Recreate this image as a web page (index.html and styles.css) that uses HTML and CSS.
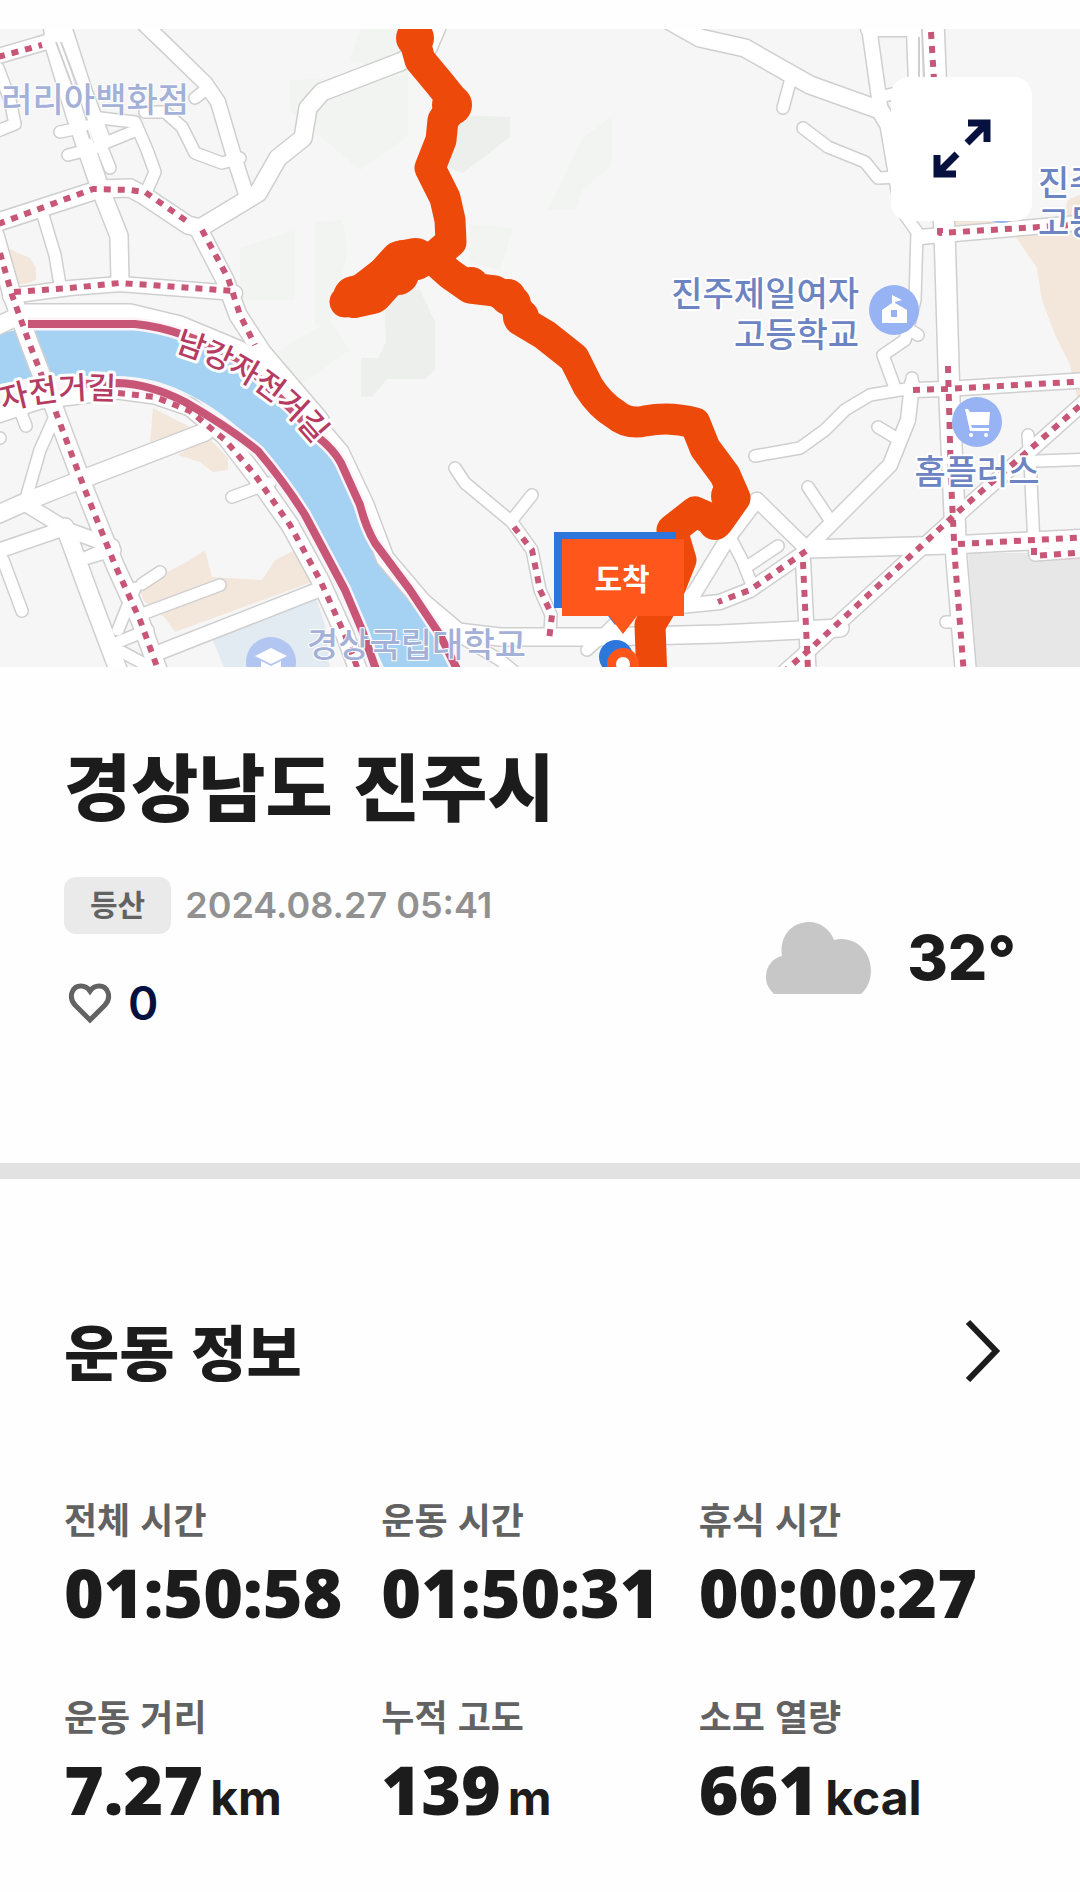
FILE: index.html
```html
<!DOCTYPE html>
<html lang="ko">
<head>
    <meta charset="UTF-8">
    <meta name="viewport" content="width=device-width, initial-scale=1.0">
    <title>경상남도 진주시</title>
    <link rel="stylesheet" href="styles.css">
</head>
<body>
    <div class="map">
        <svg class="map-canvas" viewBox="0 29 1080 638" role="img" aria-label="운동 경로 지도">
            <defs>
                <g id="roads-wide">
                    <path d="M52 20L54 45L75 115L100 188L119 236L120 282"/>
                    <path d="M440 20L428 48L400 62L322 92L308 108L303 138L278 158L258 193L200 228L188 225L143 195L130 188L100 189L-5 223"/>
                    <path d="M198 228L225 280L238 315L262 352L320 420"/>
                    <path d="M-5 235L12 295L30 345L55 410L85 490L115 565L140 620L160 675"/>
                    <path d="M-5 327L25 313L130 313L180 325L240 350L300 405L340 452L365 505L385 558L425 605L450 630"/>
                    <path d="M-8 517L30 500L75 482L205 432"/>
                    <path d="M65 527L88 590L122 680"/>
                    <path d="M668 20L700 38L745 48L810 85L880 110L889 125L900 190"/>
                    <path d="M931 20L937 150L943 230L948 400L955 560L965 680"/>
                    <path d="M935 20L940 150L946 230L951 400L958 560L968 680"/>
                    <path d="M808 549L950 545L1090 538"/>
                    <path d="M420 600L458 632L500 637L600 637L720 634L840 628"/>
                    <path d="M-5 415L40 400L118 390L155 395L190 407L225 436L255 475L290 525L320 580L345 635L360 675"/>
                </g>
                <g id="roads-mid">
                    <path d="M-5 57L50 41"/>
                    <path d="M140 20L165 44L205 83L218 102L235 160L248 200"/>
                    <path d="M10 296L70 288L120 284L235 293"/>
                    <path d="M62 20L85 92L103 140"/>
                    <path d="M920 237L1090 222"/>
                    <path d="M915 390L945 389L1090 380"/>
                    <path d="M912 384L908 420L890 465L845 510L805 550"/>
                    <path d="M1090 397L960 513L808 651L770 685"/>
                    <path d="M808 550L750 590L720 602L680 606"/>
                    <path d="M803 560L809 680"/>
                    <path d="M757 500L808 550"/>
                    <path d="M757 500L728 538L695 592L680 606"/>
                    <path d="M868 20L880 105M868 29L914 29L916 85"/>
                    <path d="M27 505L68 530L112 546"/>
                    <path d="M160 652L318 590"/>
                    <path d="M-5 552L65 528"/>
                </g>
                <g id="roads-thin">
                    <path d="M42 212L55 255L60 285"/>
                    <path d="M60 132L98 124M68 155L95 148M95 130L110 168M100 145L137 130M100 118L135 122L147 150L155 172L148 188"/>
                    <path d="M145 112L165 112L182 127L195 153L222 163L240 158"/>
                    <path d="M195 98L208 88"/>
                    <path d="M-5 132L15 124L10 100L-2 68"/>
                    <path d="M27 495L40 450L57 412"/>
                    <path d="M3 560L22 611"/>
                    <path d="M80 560L112 546M142 584L160 572M145 613L220 585M118 630L135 588M118 642L148 630M122 652L152 668M88 558L115 550"/>
                    <path d="M232 497L270 483M20 410L26 426M-5 438L0 438"/>
                    <path d="M790 82L783 108"/>
                    <path d="M803 128L828 147L865 162L878 178L900 177"/>
                    <path d="M905 215L917 232L915 300L905 340L883 355L895 388M905 327L918 335"/>
                    <path d="M755 456L800 448L825 430L845 410L870 395L912 388"/>
                    <path d="M878 427L896 438M808 487L832 523M912 378L912 390M880 97L900 92"/>
                    <path d="M730 537L742 560L752 585M748 566L778 546"/>
                    <path d="M1028 435L1030 460L1034 545L1035 555L1090 551M1038 461L1090 459M946 622L962 622"/>
                    <path d="M455 468L465 483L512 522L532 550L540 590L551 615L550 632M532 495L512 520"/>
                    <path d="M587 650L600 638L620 618M435 622L500 660L530 685"/>
                </g>
            </defs>

            <rect class="land" y="29" width="1080" height="638"/>

            <!-- parks and blocks -->
            <g class="park">
                <path d="M612 117V165L582 190L576 210H548L570 165L582 138Z"/>
                <path d="M290 80L408 75V136L360 170L290 110Z"/>
                <path d="M240 248L295 230V300H240ZM315 222L342 220L348 250L330 325H315Z"/>
                <path d="M255 365L330 320L350 350L300 385ZM470 224L513 228L500 270L470 262ZM360 29L408 29V75L350 60Z"/>
            </g>
            <g class="park-dark">
                <path d="M460 115L510 117V137L463 173L440 165Z"/>
                <path d="M384 290H420L435 322V370L425 379H387L372 397H361V358H378L386 342Z"/>
            </g>
            <g class="block">
                <path d="M0 245L30 258L36 268V280L28 283L12 285Z"/>
                <path d="M153 408L192 428L150 442Z"/>
                <path d="M178 455L208 437L228 458V470L213 472L200 462Z"/>
                <path d="M138 588L190 560L205 550L212 577L262 580L275 560L295 550L312 582L175 632L165 618L145 602Z"/>
                <path d="M1090 190L1068 200L1060 225L1015 236L1037 268L1042 300L1055 335L1070 365L1080 410Z"/>
                <path d="M952 215H1000V228H952Z"/>
            </g>
            <path class="campus" d="M212 638L315 595L325 625L330 670H225Z"/>
            <path class="mall" d="M968 553L1035 553L1090 558V670H975Z"/>

            <path class="river" d="M-5 335L20 329H135Q180 332 240 361L290 410L318 440L340 465L357 505L372 545L410 595L440 640L455 670H385L350 590L312 515Q285 475 262 450Q225 412 190 395Q155 376 115 376H40L-5 385Z"/>

            <!-- road outlines first, then fills -->
            <g class="casing">
                <use href="#roads-wide" stroke-width="20"/>
                <use href="#roads-mid" stroke-width="17"/>
                <use href="#roads-thin" stroke-width="14"/>
            </g>
            <g class="road">
                <use href="#roads-wide" stroke-width="17"/>
                <use href="#roads-mid" stroke-width="14"/>
                <use href="#roads-thin" stroke-width="11"/>
            </g>
            <path class="median" d="M56 42L72 85M61 42L77 85M87 130L90 139M919 37V78"/>

            <!-- riverside cycle path -->
            <g class="cycle-edge">
                <path d="M28 324H135Q180 328 240 360L290 408L318 437Q334 450 341 463L360 505Q366 528 375 543L410 590L440 635L460 675"/>
                <path d="M40 386L118 383Q150 384 185 402Q230 428 258 451Q285 483 305 515L345 590L362 630L378 675"/>
            </g>
            <g class="cycle">
                <path d="M28 324H135Q180 328 240 360L290 408L318 437Q334 450 341 463L360 505Q366 528 375 543L410 590L440 635L460 675"/>
                <path d="M80 384L118 383Q150 384 185 402Q230 428 258 451Q285 483 305 515L345 590L362 630L378 675"/>
            </g>

            <g class="cycle-dash">
                <path d="M-2 57L42 45"/>
                <path d="M-2 224L93 189L130 190L145 192L188 222"/>
                <path d="M202 230L228 278L240 315L255 345"/>
                <path d="M14 292L70 288L120 283L235 291"/>
                <path d="M0 253L12 295L30 345L55 410L85 490L115 565L140 620L160 675"/>
                <path d="M118 393L155 397L190 411L225 440L255 475L290 525L320 580L345 635L360 675"/>
                <path d="M931 32L934 80M940 214V233L1090 224"/>
                <path d="M948 366L951 480L955 560L964 675"/>
                <path d="M913 390L945 389L1090 381"/>
                <path d="M1090 397L960 510L808 651L780 675"/>
                <path d="M806 551L750 590L718 602"/>
                <path d="M803 562L808 670"/>
                <path d="M958 544L1090 537M1034 548V556L1090 552"/>
                <path d="M514 527L532 550L540 590L552 615L549 640"/>
            </g>

            <!-- places -->
            <g class="poi">
                <circle cx="1002" cy="198" r="25"/>
                <circle cx="894" cy="310" r="25"/>
                <circle cx="977" cy="422" r="25"/>
                <circle class="poi-faded" cx="271" cy="662" r="25"/>
            </g>
            <g class="poi-glyph">
                <path fill-rule="evenodd" d="M892 295L902 300L895 302V303L907 310V323H882V310L892 303ZM891 310V317H897V310Z"/>
                <path d="M965 409H968L970 412H990L989 425H971L972 428H989V431H970Z"/>
                <circle cx="971" cy="435" r="2"/>
                <circle cx="986" cy="435" r="2"/>
                <path d="M255 656L271 648L287 656L271 664ZM261 661L271 666L281 661V670H261Z"/>
            </g>

            <g class="place-label">
                <text class="faded" x="189" y="112" text-anchor="end">러리아백화점</text>
                <text x="859" y="306" text-anchor="end">진주제일여자</text>
                <text x="859" y="347" text-anchor="end">고등학교</text>
                <text x="1038" y="195">진주</text>
                <text x="1038" y="235">고등</text>
                <text x="977" y="484" text-anchor="middle">홈플러스</text>
                <text class="faded" x="307" y="657">경상국립대학교</text>
            </g>
            <path id="north-label" fill="none" d="M174 351Q265 378 320 452"/>
            <path id="south-label" fill="none" d="M3 411Q60 394 130 401"/>
            <g class="cycle-label">
                <text><textPath href="#north-label">남강자전거길</textPath></text>
                <text><textPath href="#south-label">자전거길</textPath></text>
            </g>

            <!-- recorded track -->
            <g class="track">
                <path d="M415 20V42L420 60L440 84L456 104L443 120L441 140L430 168L445 198L450 220L451 242L435 256L400 262L380 275L345 302"/>
                <path d="M432 258L450 274L470 288L495 291L515 302L520 320L545 335L574 358L588 386Q600 405 615 414Q628 425 645 421Q670 416 695 423L705 448L725 475L735 498L718 522L695 512L672 530L681 560L665 600L650 625L652 680"/>
            </g>
            <path class="track-merge" d="M354 297L372 293L400 262L416 259"/>
            <g class="track-bulge">
                <circle cx="415" cy="38" r="19"/>
                <circle cx="452" cy="105" r="20"/>
                <circle cx="403" cy="261" r="21"/>
                <circle cx="398" cy="274" r="21"/>
                <circle cx="471" cy="285" r="18"/>
                <circle cx="508" cy="297" r="18"/>
                <circle cx="521" cy="317" r="18"/>
                <circle cx="730" cy="496" r="19"/>
                <circle cx="715" cy="523" r="17"/>
            </g>

            <!-- start pin sits under the finish pin -->
            <path class="pin-start" d="M554 532H676V608H628L615 625L602 608H554Z"/>
            <circle class="pin-start" cx="616" cy="657" r="17"/>
            <path class="pin-finish" d="M562 539H684V616H637L623 634L609 616H562Z"/>
            <circle class="pin-finish" cx="623" cy="664" r="16"/>
            <circle class="pin-hole" cx="623" cy="664" r="7"/>
            <text class="pin-text" x="622" y="590" text-anchor="middle">도착</text>
        </svg>

        <button class="expand" type="button" aria-label="지도 크게 보기">
            <svg width="60" height="60" viewBox="0 0 60 60">
                <path d="M36 4H55V23M55 4L35 24M5 36V55H24M5 55L25 35"/>
            </svg>
        </button>
    </div>

    <section class="summary">
        <h1>경상남도 진주시</h1>
        <div class="summary-row">
            <div class="details">
                <div class="meta">
                    <span class="chip">등산</span>
                    <time datetime="2024-08-27T05:41">2024.08.27 05:41</time>
                </div>
                <button class="like" type="button" aria-label="좋아요 0">
                    <svg width="44" height="44" viewBox="0 0 44 44">
                        <path d="M22 39L7 24C0 16 4 5 13 5C17 5 20 7 22 10C24 7 27 5 31 5C40 5 44 16 37 24Z"/>
                    </svg>
                    <span>0</span>
                </button>
            </div>
            <div class="weather">
                <svg width="105" height="72" viewBox="0 0 105 72" role="img" aria-label="흐림">
                    <path d="M8 72C3 67 0 62 0 55C0 44 7 36 16 34C13 14 26 0 43 0C54 0 64 7 68 18C88 13 105 28 105 49C105 58 101 67 95 72Z"/>
                </svg>
                <span>32°</span>
            </div>
        </div>
    </section>

    <section class="workout">
        <div class="workout-head">
            <h2>운동 정보</h2>
            <a class="more" href="#workout" aria-label="운동 정보 더보기">
                <svg width="64" height="64" viewBox="0 0 64 64">
                    <path d="M16 4L44 33L16 62"/>
                </svg>
            </a>
        </div>
        <dl class="stats" id="workout">
            <div class="stat">
                <dt>전체 시간</dt>
                <dd>01:50:58</dd>
            </div>
            <div class="stat">
                <dt>운동 시간</dt>
                <dd>01:50:31</dd>
            </div>
            <div class="stat">
                <dt>휴식 시간</dt>
                <dd>00:00:27</dd>
            </div>
            <div class="stat">
                <dt>운동 거리</dt>
                <dd>7.27<span class="unit">km</span></dd>
            </div>
            <div class="stat">
                <dt>누적 고도</dt>
                <dd>139<span class="unit">m</span></dd>
            </div>
            <div class="stat">
                <dt>소모 열량</dt>
                <dd>661<span class="unit">kcal</span></dd>
            </div>
        </dl>
    </section>
</body>
</html>
```

FILE: styles.css
```css
* {
    box-sizing: border-box;
}

body {
    margin: 0;
    padding-top: 29px;
    background-color: #fefefe;
    color: #1c1c1c;
    font-family: Inter, "Noto Sans CJK KR", sans-serif;
}

h1, h2, dl, dd {
    margin: 0;
}

h1, h2, dt {
    font-family: "Noto Sans CJK KR", sans-serif;
}

button {
    border: none;
    padding: 0;
    cursor: pointer;
    font-family: inherit;
}

svg {
    display: block;
}

/* Map */
.map {
    position: relative;
}

.map-canvas {
    width: 100%;
    height: auto;
    font-family: "Noto Sans CJK KR", sans-serif;
}

.land {
    fill: #f6f6f6;
}

.park {
    fill: #f2f4f2;
}

.park-dark {
    fill: #ecefec;
}

.block {
    fill: #f3e7db;
}

.campus {
    fill: #e2eaf2;
}

.mall {
    fill: #e7e7e7;
}

.river {
    fill: #a5d2f2;
}

.casing, .road {
    fill: none;
    stroke-linecap: round;
    stroke-linejoin: round;
}

.casing {
    stroke: #cfcfcf;
}

.road {
    stroke: #fff;
}

.median {
    fill: none;
    stroke: #cfcfcf;
    stroke-width: 2;
}

.cycle, .cycle-edge, .cycle-dash {
    fill: none;
    stroke: #c85676;
    stroke-width: 8;
    stroke-linejoin: round;
}

.cycle-edge {
    stroke: #fbf3f8;
    stroke-width: 13;
}

.cycle-dash {
    stroke-width: 6;
    stroke-dasharray: 7 7;
}

.poi {
    fill: #97b3f3;
}

.poi-faded {
    fill: #b3c6f1;
}

.poi-glyph {
    fill: #fff;
}

.place-label {
    fill: #6c84c2;
    font-size: 34px;
    font-weight: 500;
    stroke: #fff;
    stroke-width: 4;
    stroke-linejoin: round;
    paint-order: stroke;
}

.place-label .faded {
    fill: #a3b0d8;
    stroke-width: 2;
}

.cycle-label {
    fill: #b63b62;
    font-size: 31px;
    font-weight: 500;
    stroke: #fff;
    stroke-width: 6;
    stroke-linejoin: round;
    paint-order: stroke;
}

.track, .track-merge {
    fill: none;
    stroke: #ed490b;
    stroke-width: 31;
    stroke-linecap: round;
    stroke-linejoin: round;
}

.track-merge {
    stroke-width: 42;
}

.track-bulge {
    fill: #ed490b;
}

.pin-start {
    fill: #2d76dc;
}

.pin-finish {
    fill: #ff561c;
}

.pin-hole {
    fill: #fff;
}

.pin-text {
    fill: #fff;
    font-size: 30px;
    font-weight: 700;
}

.expand {
    position: absolute;
    top: 48px;
    right: 48px;
    display: flex;
    align-items: center;
    justify-content: center;
    width: 141px;
    height: 144px;
    border-radius: 18px;
    background-color: #fff;
}

.expand path {
    fill: none;
    stroke: #06113f;
    stroke-width: 7;
}

/* Summary */
.summary {
    padding: 64px 64px 136px;
    border-bottom: 16px solid #e2e2e2;
}

h1 {
    margin-bottom: 42px;
    font-size: 73px;
    font-weight: 900;
    line-height: 104px;
}

.summary-row {
    display: flex;
    align-items: center;
    justify-content: space-between;
}

.details {
    display: flex;
    flex-direction: column;
    align-items: flex-start;
    gap: 45px;
}

.meta {
    display: flex;
    align-items: center;
    gap: 14px;
    color: #919191;
    font-size: 36px;
    font-weight: 600;
    line-height: 57px;
}

.chip {
    padding: 0 26px;
    border-radius: 12px;
    background-color: #eaeaea;
    color: #626262;
    font-size: 30px;
    font-weight: 700;
}

.like {
    display: flex;
    align-items: center;
    gap: 16px;
    padding-left: 4px;
    background: none;
    color: #06113f;
    font-size: 46px;
    font-weight: 600;
    line-height: 48px;
}

.like path {
    fill: none;
    stroke: #626262;
    stroke-width: 5;
}

.weather {
    display: flex;
    align-items: center;
    gap: 36px;
    padding-top: 12px;
    font-size: 62px;
    font-weight: 800;
    line-height: 80px;
}

.weather path {
    fill: #c7c7c7;
}

/* Workout info */
.workout {
    padding: 127px 64px 63px;
}

.workout-head {
    display: flex;
    align-items: center;
    justify-content: space-between;
    margin-bottom: 100px;
}

h2 {
    font-size: 60px;
    font-weight: 900;
    line-height: 88px;
}

.more path {
    fill: none;
    stroke: #1c1c1c;
    stroke-width: 6;
}

.stats {
    display: grid;
    grid-template-columns: repeat(3, 1fr);
    row-gap: 59px;
}

dt {
    margin-bottom: 10px;
    color: #626262;
    font-size: 36px;
    font-weight: 700;
    line-height: 48px;
}

dd {
    font-family: "Open Sans", sans-serif;
    font-size: 68px;
    font-weight: 800;
    line-height: 80px;
    white-space: nowrap;
}

.unit {
    margin-left: 7px;
    font-family: Inter, sans-serif;
    font-size: 48px;
    font-weight: 700;
}
```
